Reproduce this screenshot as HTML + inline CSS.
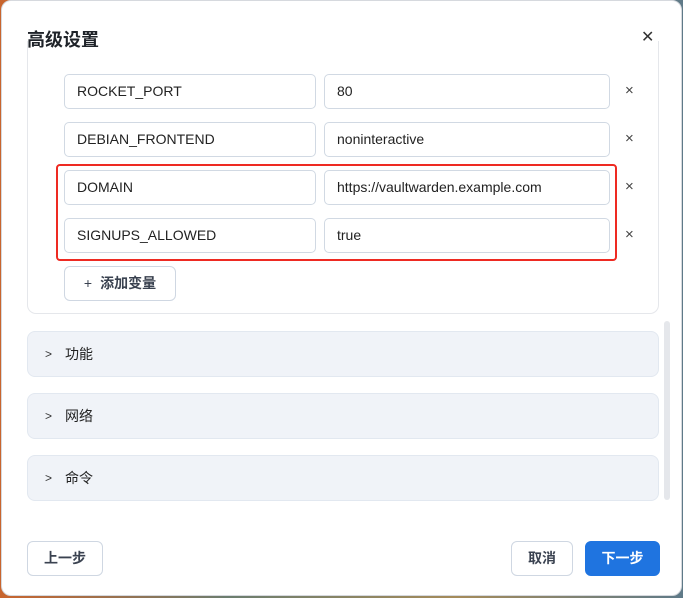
<!DOCTYPE html>
<html><head><meta charset="utf-8"><style>
*{box-sizing:border-box;margin:0;padding:0}
body{width:683px;height:598px;background:linear-gradient(90deg,#c9652e,#6b7d6f,#a58b5a,#5f7a88);font-family:"Liberation Sans","Noto Sans CJK SC",sans-serif;position:relative;overflow:hidden}
.dlg{position:absolute;left:1px;top:0;width:681px;height:596px;background:#fff;border-radius:10px;border:1px solid #d6d9de}
.abs{position:absolute}
.title{left:25px;top:25px;font-size:18px;font-weight:bold;color:#1f2329}
.x{color:#333;font-size:16px}
.card{left:25px;top:40px;width:632px;height:273px;border:1px solid #e5e7eb;border-top:none;border-radius:0 0 9px 9px}
.clip{left:0;top:0;width:681px;height:70px;background:#fff}
.in{height:35px;border:1px solid #d1d9e3;border-radius:5px;font-size:14px;color:#222;padding-left:12px;line-height:33px}
.rx{font-size:15px;color:#444}
.red{left:54px;top:163px;width:561px;height:97px;border:2px solid #ee2a22;border-radius:4px}
.btn{border:1px solid #cfd7e2;border-radius:6px;font-size:14px;color:#3a4250;text-align:center;line-height:33px;height:35px;font-weight:bold}
.acc{left:25px;width:632px;height:46px;background:#f0f3f8;border:1px solid #e2e8f0;border-radius:8px;font-size:14px;color:#222;line-height:44px}
.acc span.c{position:absolute;left:17px;font-size:12px;color:#333}
.acc span.t{position:absolute;left:37px}
</style></head><body>
<div class="dlg">
<div class="abs title">高级设置</div>
<div class="abs x" style="left:639px;top:26px">✕</div>
<div class="abs card"></div>
<div class="abs in" style="left:62px;top:73px;width:252px">ROCKET_PORT</div>
<div class="abs in" style="left:322px;top:73px;width:286px">80</div>
<div class="abs rx" style="left:623px;top:81px">×</div>
<div class="abs in" style="left:62px;top:121px;width:252px">DEBIAN_FRONTEND</div>
<div class="abs in" style="left:322px;top:121px;width:286px">noninteractive</div>
<div class="abs rx" style="left:623px;top:129px">×</div>
<div class="abs in" style="left:62px;top:169px;width:252px">DOMAIN</div>
<div class="abs in" style="left:322px;top:169px;width:286px">https://vaultwarden.example.com</div>
<div class="abs rx" style="left:623px;top:177px">×</div>
<div class="abs in" style="left:62px;top:217px;width:252px">SIGNUPS_ALLOWED</div>
<div class="abs in" style="left:322px;top:217px;width:286px">true</div>
<div class="abs rx" style="left:623px;top:225px">×</div>
<div class="abs red"></div>
<div class="abs btn" style="left:62px;top:265px;width:112px;font-weight:bold"><span style="font-weight:normal;margin-right:8px">+</span>添加变量</div>
<div class="abs acc" style="top:330px"><span class="c">&gt;</span><span class="t">功能</span></div>
<div class="abs acc" style="top:392px"><span class="c">&gt;</span><span class="t">网络</span></div>
<div class="abs acc" style="top:454px"><span class="c">&gt;</span><span class="t">命令</span></div>
<div class="abs" style="left:662px;top:320px;width:6px;height:179px;background:#e5e7eb;border-radius:3px"></div>
<div class="abs btn" style="left:25px;top:540px;width:76px">上一步</div>
<div class="abs btn" style="left:509px;top:540px;width:62px">取消</div>
<div class="abs btn" style="left:583px;top:540px;width:75px;background:#1f74e0;border-color:#1f74e0;color:#fff">下一步</div>
</div>
</body></html>
